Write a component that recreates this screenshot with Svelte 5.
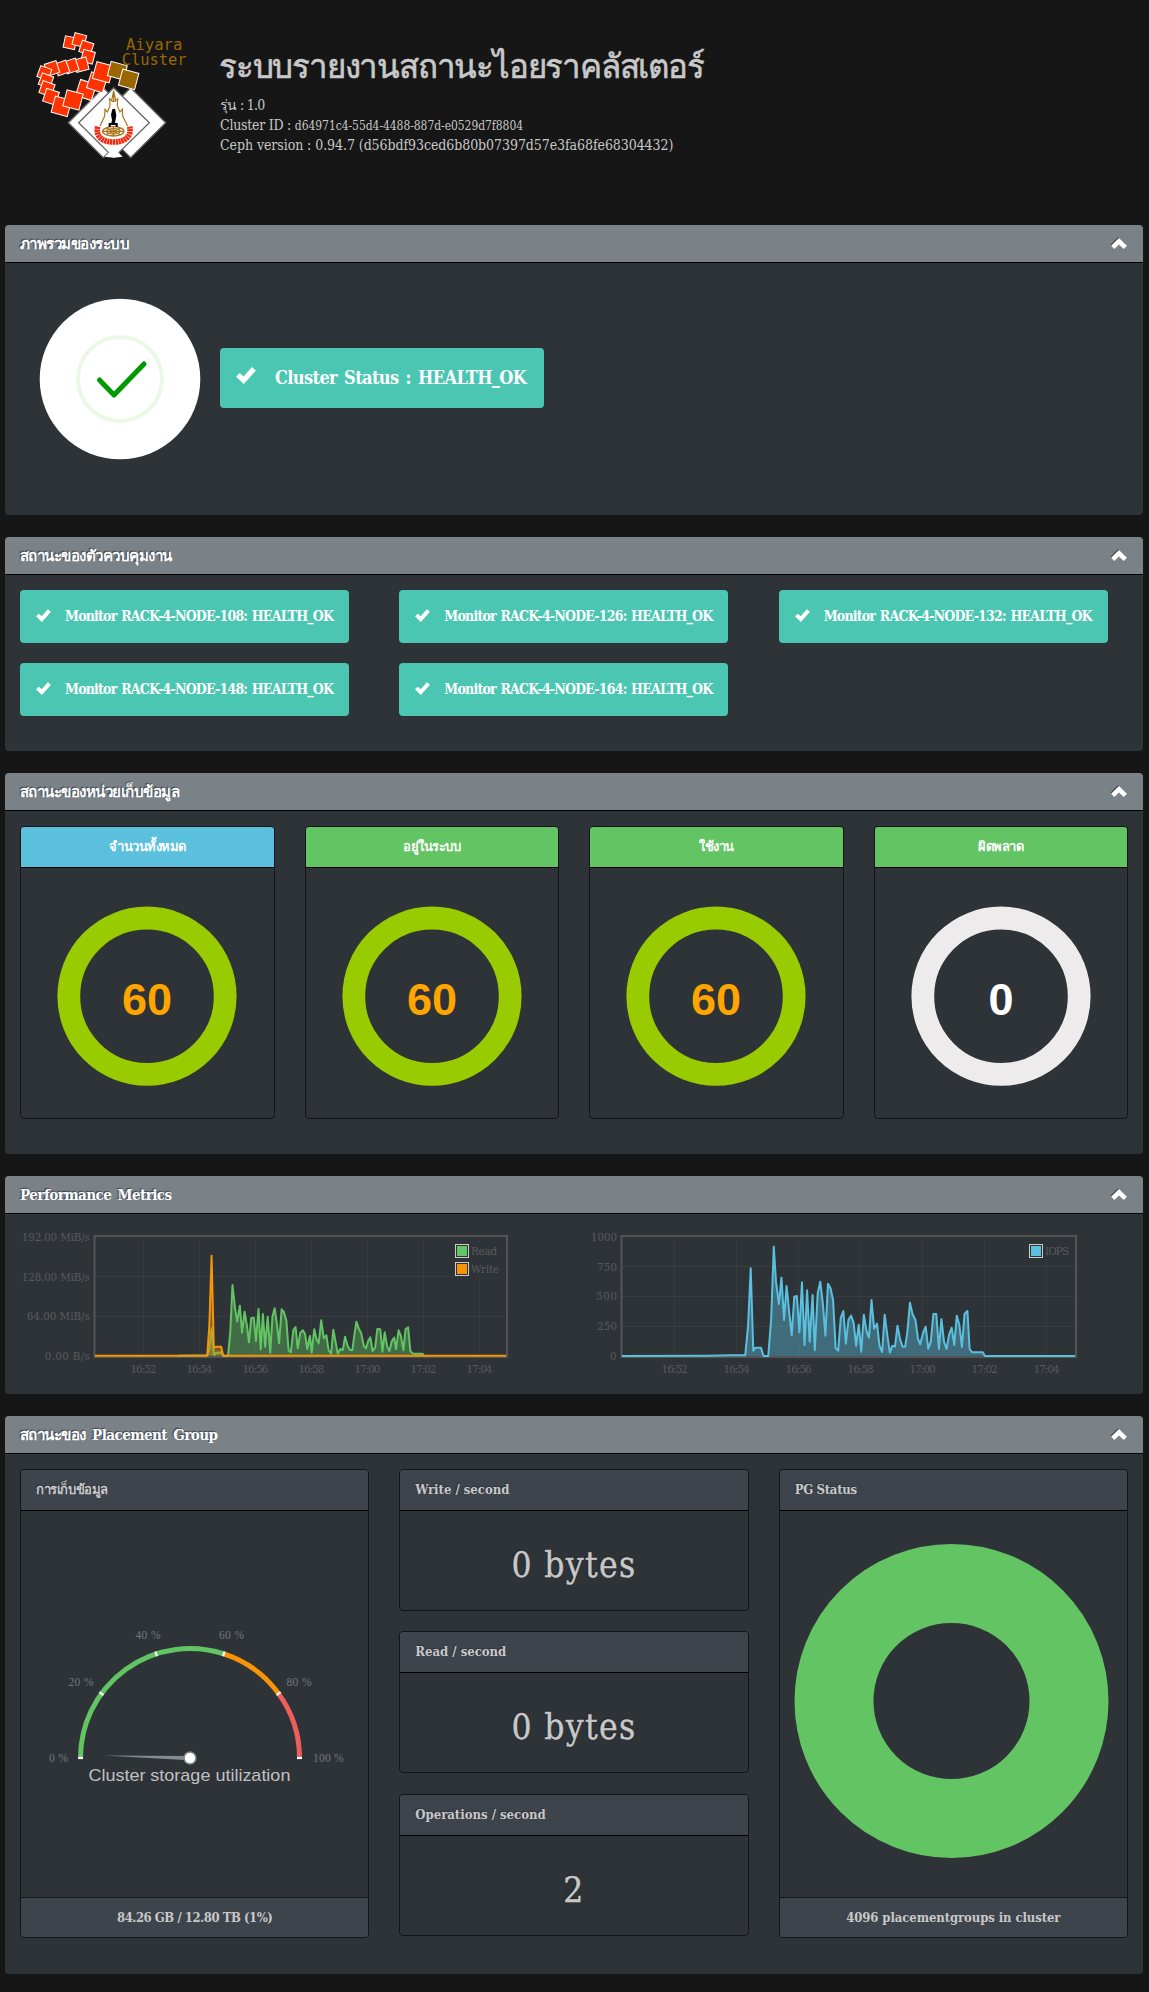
<script>
  const scales = [
    [210, 128, 35, 12], [238, 120, 36, 15], [259, 143, 36, 18], [264, 170, 36, 15],
    [244, 194, 38, -15], [214, 198, 37, -18], [186, 204, 37, -20], [156, 205, 37, -18],
    [133, 219, 35, 20], [138, 242, 36, 20], [141, 266, 38, 20], [153, 290, 40, 18],
    [184, 319, 50, 15], [258, 270, 50, 18], [219, 300, 50, 15], [291, 247, 50, 18], [309, 217, 52, 15]
  ];

  const monitors = ['108', '126', '132', '148', '164'];

  const tiles = [
    { title: 'จำนวนทั้งหมด', value: 60, kind: 'info' },
    { title: 'อยู่ในระบบ', value: 60, kind: 'ok' },
    { title: 'ใช้งาน', value: 60, kind: 'ok' },
    { title: 'ผิดพลาด', value: 0, kind: 'ok' }
  ];

  const rates = [
    { title: 'Write / second', value: '0 bytes' },
    { title: 'Read / second', value: '0 bytes' },
    { title: 'Operations / second', value: '2' }
  ];

  const times = ['16:52', '16:54', '16:56', '16:58', '17:00', '17:02', '17:04'];

  const read = '486,572 565,571 571,550 577,490 584,570 590,563 603,562 608,572 622,572 628,500 634,360 641,430 647,470 654,422 660,503 667,440 673,480 679,532 685,460 692,458 698,528 705,432 711,553 717,447 723,545 730,455 737,563 743,455 749,430 755,475 761,535 768,433 774,441 781,467 787,556 793,562 800,495 806,486 812,550 819,503 826,496 832,508 838,552 845,513 850,563 857,493 863,523 869,535 876,466 883,520 890,511 896,555 903,566 909,494 915,530 921,566 928,552 935,555 941,515 948,543 955,556 961,555 967,505 972,470 978,490 985,505 992,542 998,550 1004,528 1010,517 1016,558 1023,548 1029,492 1037,493 1043,560 1049,502 1056,545 1062,558 1068,530 1075,518 1080,552 1087,496 1093,512 1100,556 1106,492 1113,487 1119,558 1126,566 1152,566 1156,572';
  const write = '259,572.5 565,572.5 571,480 577,272 583,548 590,545 603,545 609,572.5 1380,572.5';
  const iops = '128,573 360,572 425,571 465,571 473,480 480,310 487,557 493,548 508,548 515,573 528,573 536,460 543,245 549,350 557,417 564,338 571,465 578,363 585,440 592,511 599,395 606,393 613,502 620,352 627,541 634,376 641,530 649,390 655,556 663,385 670,350 677,415 684,512 691,356 698,370 705,405 712,550 719,557 726,458 733,438 740,536 747,464 754,452 761,473 768,542 775,479 782,560 789,449 796,497 803,518 810,405 817,491 825,476 832,543 839,561 846,449 853,510 860,563 867,542 874,545 881,482 888,523 895,545 902,545 908,500 915,413 922,447 930,465 937,522 943,538 951,503 958,485 965,551 972,530 979,447 987,447 994,552 1001,462 1008,530 1015,552 1022,508 1029,488 1036,540 1043,452 1050,480 1057,546 1064,447 1072,438 1078,552 1085,562 1114,562 1120,573 1366,573';

  // Point on the gauge dial for a percentage at radius r.
  const dial = (pct, r) => {
    const a = Math.PI * (1 - pct / 100);
    return `${(169 + r * Math.cos(a)).toFixed(2)} ${(247 - r * Math.sin(a)).toFixed(2)}`;
  };
  const arc = (from, to) => `M${dial(from, 109.5)}A109.5 109.5 0 0 1 ${dial(to, 109.5)}`;
  const dialLabels = [
    ['0 %', 28, 250.5, 19], ['20 %', 47.5, 175, 25], ['40 %', 114.5, 128, 25],
    ['60 %', 198, 128, 25], ['80 %', 265.5, 175, 25], ['100 %', 292, 250.5, 30.5]
  ];
</script>

{#snippet tick(cls)}
  <svg class={cls} viewBox="0 0 20 17"><path d="M0 9.6 3.8 6 7.6 9.4 15.8 0 20 3.6 7.8 17Z" fill="#fff" /></svg>
{/snippet}

{#snippet heading(text)}
  <div class="head">
    <span>{text}</span>
    <svg class="chev" viewBox="0 0 18 14">
      <path d="M8 0.2 0.3 7.8 3.4 10.9 8 6.2 12.8 10.6 15.6 7.5Z" fill="#42474b" />
      <path d="M9 1 1.1 8.8 4.3 12 9 7.500 13.700 12 16.900 8.800Z" fill="#fff" />
    </svg>
  </div>
{/snippet}

<main>
  <header>
    <svg class="logo" viewBox="0 0 600 480">
      <g fill="#fff" stroke="#666" stroke-width="4">
        <path d="M392 263 497 368 392 473 287 368Z" />
        <path d="M310 263 415 368 310 473 205 368Z" />
        <path d="M341 263 446 368 341 473 236 368Z" stroke="none" />
        <path d="M341 263 448 368 341 473 236 368Z" fill="none" />
      </g>
      <path d="M314 470 341 443 368 470 341 473Z" fill="#fff" />
      <g fill="#f30" stroke="#fff" stroke-width="3">
        {#each scales as [x, y, s, r]}
          <rect x={x - s / 2} y={y - s / 2} width={s} height={s} transform="rotate({r} {x} {y})" />
        {/each}
      </g>
      <g fill="#960" stroke="#fff" stroke-width="3">
        <rect x="327" y="190" width="50" height="44" transform="rotate(15 352 212)" />
        <rect x="361" y="213" width="50" height="50" transform="rotate(15 386 238)" />
      </g>
      <g fill="none" stroke="#a8751a" stroke-width="3.500">
        <path d="M341 272 335 302 329 296 330 318 322 336 315 328 314 348 300 378M341 272 347 302 353 296 352 318 360 336 367 328 368 348 383 378M341 274V306M335 304H347" />
        <ellipse cx="340" cy="394" rx="32" ry="14" stroke-width="4" />
        <ellipse cx="340" cy="394" rx="20" ry="8" stroke-width="4" />
        <path d="M308 394H372M318 384 362 404M362 384 318 404M340 380V408" />
      </g>
      <path d="M337 328 345 326 349 346 345 369 353 369V381H347V375H332V381H326V369H334L336 360 333 344Z" fill="#000" />
      <path d="M293 380C286 410 308 426 341 426S396 410 389 380" fill="none" stroke="#f42a10" stroke-width="17" stroke-dasharray="7 1.400" />
      <g class="brand">
        <text x="378" y="150" textLength="169" lengthAdjust="spacingAndGlyphs">Aiyara</text>
        <text x="365" y="194" textLength="195" lengthAdjust="spacingAndGlyphs">Cluster</text>
      </g>
    </svg>
    <div class="titles">
      <h1>ระบบรายงานสถานะไอยราคลัสเตอร์</h1>
      <p class="ver">รุ่น : 1.0</p>
      <p class="cid">Cluster ID : <small>d64971c4-55d4-4488-887d-e0529d7f8804</small></p>
      <p class="ceph">Ceph version : 0.94.7 (d56bdf93ced6b80b07397d57e3fa68fe68304432)</p>
    </div>
  </header>

  <section class="panel overview">
    {@render heading('ภาพรวมของระบบ')}
    <div class="body">
      <svg class="badge" viewBox="0 0 162 162">
        <circle cx="81" cy="81" r="80.300" fill="#fff" />
        <circle cx="81" cy="81" r="42" fill="none" stroke="#ecf8e6" stroke-width="4" />
        <path d="M60.500 82 75 97 105 66" fill="none" stroke="#090" stroke-width="5" stroke-linecap="round" stroke-linejoin="round" />
      </svg>
      <div class="status">{@render tick('tick big')}<span>Cluster Status : HEALTH_OK</span></div>
    </div>
  </section>

  <section class="panel mons">
    {@render heading('สถานะของตัวควบคุมงาน')}
    <div class="body">
      {#each monitors as m}
        <div class="cell"><div class="mon">{@render tick('tick')}<span>Monitor RACK-4-NODE-{m}: HEALTH_OK</span></div></div>
      {/each}
    </div>
  </section>

  <section class="panel osds">
    {@render heading('สถานะของหน่วยเก็บข้อมูล')}
    <div class="body">
      {#each tiles as t}
        <div class="card">
          <div class="cap {t.kind}">{t.title}</div>
          <svg class="ring" viewBox="0 0 252 251">
            <circle cx="126" cy="128.200" r="78.200" fill="none" stroke={t.value ? '#9c0' : '#edebeb'} stroke-width="22.800" />
            <text class="num" class:zero={!t.value} x="126" y="147" text-anchor="middle">{t.value}</text>
          </svg>
        </div>
      {/each}
    </div>
  </section>

  <section class="panel perf">
    {@render heading('Performance Metrics')}
    <div class="body">
      <svg class="plot" viewBox="20 1229 539 150">
        {#each times as t, i}
          <path class="grid" d="M{143.4 + i * 56} 1236V1356" />
          <text class="axis" x={143.4 + i * 56} y="1373" text-anchor="middle" textLength="26">{t}</text>
        {/each}
        <path class="grid" d="M94 1276.500H507M94 1316.500H507" />
        {#each [['192.00 MiB/s', 68], ['128.00 MiB/s', 68], ['64.00 MiB/s', 63], ['0.00 B/s', 45]] as [l, w], i}
          <text class="axis" x={89.800 - w} y={1240.700 + i * 39.800} textLength={w}>{l}</text>
        {/each}
        <rect class="frame" x="94.500" y="1236" width="412.500" height="121" />
        <g transform="translate(0 1165) scale(.36670 .33333)">
          <polygon points="486,572 {read}" fill="#62c462" fill-opacity=".4" />
          <polyline points={read} class="line" stroke="#62c462" />
          <polygon points={write} fill="#f89406" fill-opacity=".4" />
          <polyline points={write} class="line" stroke="#f89406" />
        </g>
        <path d="M453 1242H504V1278H453Z" fill="#2e3338" />
        <rect class="key" x="455.500" y="1244.500" width="13" height="13" /><rect x="457" y="1246" width="10" height="10" fill="#62c462" />
        <rect class="key" x="455.500" y="1262.500" width="13" height="13" /><rect x="457" y="1264" width="10" height="10" fill="#f89406" />
        <text class="axis" x="471" y="1255" textLength="26">Read</text>
        <text class="axis" x="471" y="1273" textLength="28">Write</text>
      </svg>
      <svg class="plot" viewBox="589 1229 539 150">
        {#each times as t, i}
          <path class="grid" d="M{674.600 + i * 62} 1236V1356" />
          <text class="axis" x={674.600 + i * 62} y="1373" text-anchor="middle" textLength="26">{t}</text>
        {/each}
        <path class="grid" d="M621 1266.500H1075M621 1296.500H1075M621 1326.500H1075" />
        {#each [['1000', 26], ['750', 20], ['500', 21], ['250', 20], ['0', 7]] as [l, w], i}
          <text class="axis" x={617 - w} y={1240.700 + i * 29.800} textLength={w}>{l}</text>
        {/each}
        <rect class="frame" x="621.500" y="1236" width="454.500" height="121" />
        <g transform="translate(575 1165) scale(.36607 .33333)">
          <polygon points={iops} fill="#5bc0de" fill-opacity=".4" />
          <polyline points={iops} class="line" stroke="#5bc0de" />
        </g>
        <path d="M1027 1242H1072V1260H1027Z" fill="#2e3338" />
        <rect class="key" x="1029.500" y="1244.500" width="13" height="13" /><rect x="1031" y="1246" width="10" height="10" fill="#5bc0de" />
        <text class="axis" x="1045" y="1255" textLength="24">IOPS</text>
      </svg>
    </div>
  </section>

  <section class="panel pgs">
    {@render heading('สถานะของ Placement Group')}
    <div class="body">
      <div class="card">
        <div class="cap thai">การเก็บข้อมูล</div>
        <svg class="chart" viewBox="0 0 347 386">
          <path d={arc(0, 60)} fill="none" stroke="#62c462" stroke-width="5" />
          <path d={arc(60, 80)} fill="none" stroke="#f89406" stroke-width="5" />
          <path d={arc(80, 100)} fill="none" stroke="#ee5f5b" stroke-width="5" />
          {#each [0, 20, 40, 60, 80, 100] as p}
            <path d="M{dial(p, 107)}L{dial(p, 112)}" stroke="#fff" stroke-width="2.200" />
          {/each}
          {#each dialLabels as [l, x, y, w]}
            <text class="pct" {x} {y} textLength={w}>{l}</text>
          {/each}
          <path d="M83 244.500 168 245V249.200Z" fill="#858c91" />
          <circle cx="169" cy="247" r="6" fill="#fff" stroke="#7a8288" stroke-width="1.500" />
          <text class="gname" x="67.400" y="269.500" textLength="202" lengthAdjust="spacingAndGlyphs">Cluster storage utilization</text>
        </svg>
        <div class="foot tight">84.26 GB / 12.80 TB (1%)</div>
      </div>
      <div class="stack">
        {#each rates as r}
          <div class="card">
            <div class="cap">{r.title}</div>
            <div class="rate">{r.value}</div>
          </div>
        {/each}
      </div>
      <div class="card">
        <div class="cap pg">PG Status</div>
        <svg class="chart" viewBox="0 0 347 386">
          <circle cx="171.500" cy="190" r="117.500" fill="none" stroke="#62c462" stroke-width="79" />
        </svg>
        <div class="foot">4096 placementgroups in cluster</div>
      </div>
    </div>
  </section>
</main>

<style>
  :global(body) { background: #161616; }
  main {
    box-sizing: border-box;
    width: 1149px;
    height: 1992px;
    padding: 0 6px 0 5px;
    font: 14px/20px "DejaVu Serif Condensed", "DejaVu Serif", serif;
    color: #c8c8c8;
  }
  svg { display: block; }
  header { display: flex; height: 225px; }
  .logo { width: 200px; height: 160px; margin-left: -5px; }
  .brand { font: 45px "DejaVu Sans Mono", monospace; fill: #960; }
  .titles { padding: 45px 0 0 19px; white-space: nowrap; }
  h1 { margin: 0 0 7px; font-size: 33px; line-height: 43px; font-weight: 400; -webkit-text-stroke: .6px #c8c8c8; letter-spacing: -1.2px; }
  p { margin: 0 0 0 1px; height: 20px; }
  .ver { letter-spacing: -.7px; }
  .cid { letter-spacing: -.25px; }
  small { font-size: 12px; letter-spacing: -.06px; }
  .ceph { letter-spacing: -.07px; }

  .panel { margin-bottom: 22px; background: #2e3338; border-radius: 4px; overflow: hidden; }
  .head {
    display: flex;
    justify-content: space-between;
    align-items: center;
    height: 37px;
    padding: 0 15px;
    border-bottom: 1px solid #000;
    background: #7a8288;
    color: #fff;
    font-size: 15px;
    font-weight: 700;
    letter-spacing: -.52px;
    word-spacing: 2px;
    text-shadow: -1px -1px 1px rgba(0, 0, 0, .5);
  }
  .chev { width: 18px; height: 14px; }

  .overview { height: 290px; }
  .overview .body { display: flex; padding: 35px 34px; gap: 19px; }
  .badge { width: 162px; height: 162px; }
  .status, .mon {
    display: flex;
    box-sizing: border-box;
    background: #4ac6b2;
    border-radius: 4px;
    color: #fff;
    font-weight: 700;
    white-space: nowrap;
  }
  .status { width: 324px; height: 60px; margin-top: 50px; padding: 19px 0 0 16px; font-size: 18px; line-height: 22px; letter-spacing: -.6px; word-spacing: 2px; }
  .tick { width: 15px; height: 13px; margin: 3px 14px 0 0; flex: none; }
  .tick.big { width: 20px; height: 17px; margin: 0 19px 0 0; }

  .mons { height: 214px; }
  .mons .body { display: grid; grid-template-columns: repeat(3, 1fr); grid-auto-rows: 53px; row-gap: 20px; padding-top: 15px; }
  .cell { padding: 0 15px; }
  .mon { width: 329px; height: 53px; padding: 16px 0 0 16px; letter-spacing: -.8px; word-spacing: 1px; }

  .card { box-sizing: border-box; border: 1px solid #141517; border-radius: 4px; overflow: hidden; }
  .cap {
    height: 40px;
    padding: 0 15px;
    border-bottom: 1px solid #000;
    background: #3e444c;
    font-size: 13px;
    line-height: 40px;
    font-weight: 700;
    text-shadow: -1px -1px 1px rgba(0, 0, 0, .25);
  }
  .cap.info, .cap.ok { padding: 0; text-align: center; color: #fff; text-shadow: none; letter-spacing: -.5px; line-height: 39px; }
  .cap.info { background: #5bc0de; }
  .cap.ok { background: #62c462; }
  .cap.thai { letter-spacing: -.4px; }
  .cap.pg { letter-spacing: -.3px; }

  .osds { height: 381px; }
  .osds .body { display: grid; grid-template-columns: repeat(4, 1fr); gap: 30px; padding: 15px; }
  .osds .card { height: 293px; }
  .ring { width: 252px; height: 251px; }
  .num { font: 700 45px "Liberation Sans", sans-serif; fill: #ffa500; }
  .num.zero { fill: #fff; }

  .perf { height: 218px; }
  .perf .body { display: grid; grid-template-columns: 1fr 1fr; gap: 30px; padding: 15px; }
  .plot { width: 539px; height: 150px; }
  .grid { stroke: #393c40; stroke-width: 1; fill: none; }
  .frame { fill: none; stroke: #545454; stroke-width: 2; }
  .axis { font-size: 11.500px; fill: #5a5a5a; }
  .line { fill: none; stroke-width: 2; vector-effect: non-scaling-stroke; stroke-linejoin: round; }
  .key { fill: none; stroke: #ccc; }

  .pgs { height: 558px; margin: 0; }
  .pgs .body { display: grid; grid-template-columns: repeat(3, 1fr); gap: 30px; padding: 15px; }
  .pgs .body > .card { height: 469px; }
  .chart { width: 347px; height: 386px; }
  .stack { display: flex; flex-direction: column; gap: 20.300px; }
  .stack .card { height: 142px; }
  .rate { padding-top: 33px; text-align: center; font-size: 35px; line-height: 42px; letter-spacing: 1.400px; -webkit-text-stroke: .4px #c8c8c8; text-shadow: -1px -1px 1px rgba(0, 0, 0, .3); }
  .pct { font: 11.500px "Liberation Serif", serif; fill: #74777a; }
  .gname { font: 17px "Liberation Sans", sans-serif; fill: #c0c0c0; }
  .foot {
    height: 40px;
    border-top: 1px solid #141517;
    background: #3e444c;
    text-align: center;
    font-size: 13px;
    line-height: 39px;
    font-weight: 700;
    letter-spacing: -.1px;
  }
  .foot.tight { letter-spacing: -.47px; }
</style>
